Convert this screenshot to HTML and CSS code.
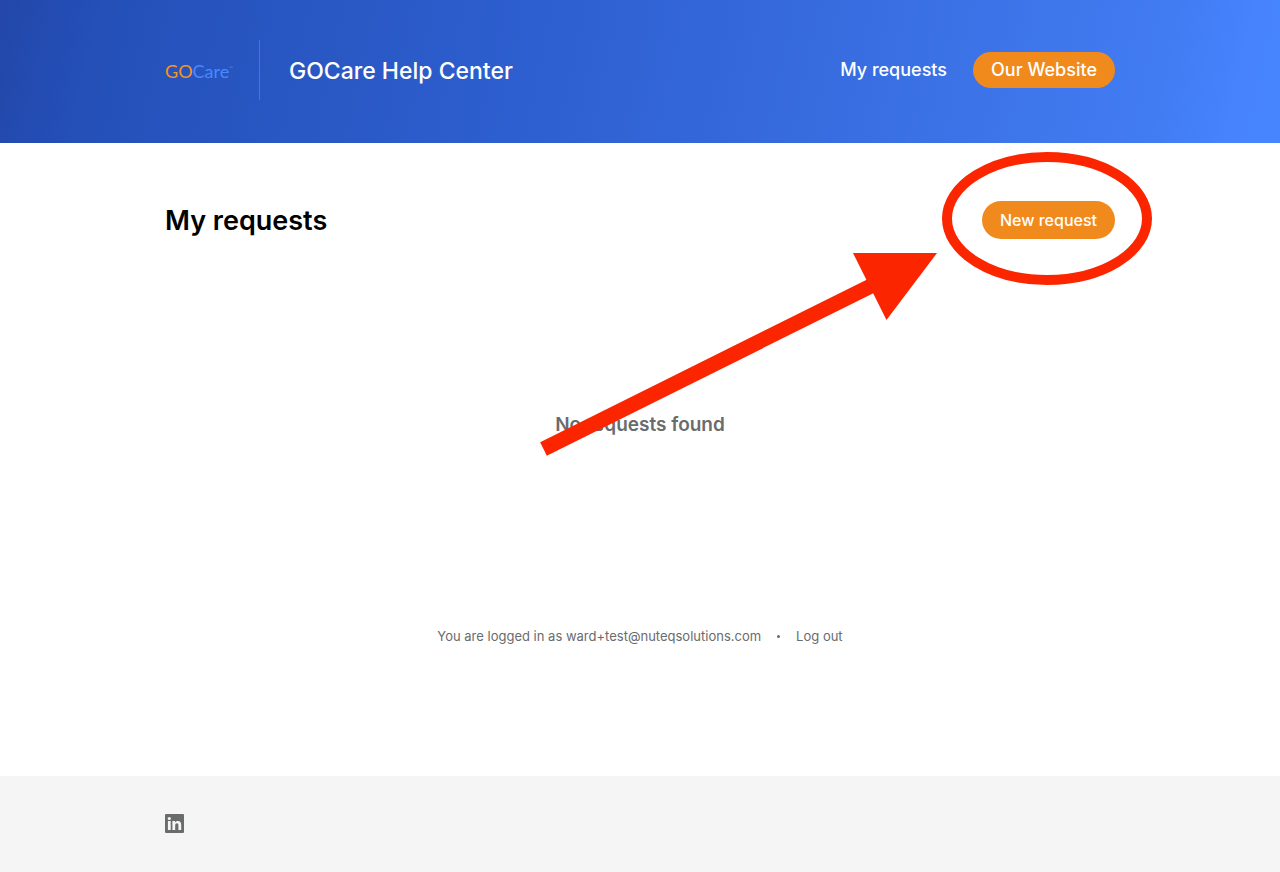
FILE: index.html
```
<!DOCTYPE html>
<html lang="en">
<head>
<meta charset="utf-8">
<meta name="viewport" content="width=device-width, initial-scale=1">
<title>GOCare Help Center</title>
<link rel="stylesheet" href="styles.css">
</head>
<body>
<header class="header">
  <div class="container header-inner">
    <a class="logo" href="#" aria-label="GOCare"><span class="logo-go">GO</span>Care<span class="logo-tm">™</span></a>
    <a class="site-name" href="#">GOCare Help Center</a>
    <nav class="nav">
      <a class="nav-link" href="#">My requests</a>
      <a class="nav-button" href="#">Our Website</a>
    </nav>
  </div>
</header>
<main class="main">
  <div class="container content">
    <div class="page-head">
      <h1 class="page-title">My requests</h1>
      <a class="new-request" href="#">New request</a>
    </div>
    <p class="empty">No requests found</p>
    <div class="session">
      <span>You are logged in as ward+test@nuteqsolutions.com</span>
      <span class="dot"></span>
      <a class="logout" href="#">Log out</a>
    </div>
    <svg class="annotation" width="630" height="317" viewBox="530 143 630 317" aria-hidden="true">
      <ellipse cx="1047" cy="218.5" rx="100" ry="61.5" fill="none" stroke="#fb2500" stroke-width="10"/>
      <path d="M543.5 449 875 284" stroke="#fb2500" stroke-width="15"/>
      <path d="M853 253H937L886.500 320Z" fill="#fb2500"/>
    </svg>
  </div>
</main>
<footer class="footer">
  <div class="container">
    <a class="social" href="#" aria-label="LinkedIn">
      <svg width="19" height="19" viewBox="0 0 19 19">
        <rect width="19" height="19" rx="1" fill="#6a6b6d"/>
        <g fill="#f5f5f5">
          <circle cx="4.300" cy="4.500" r="1.600"/>
          <path d="M2.900 7.100h2.800v9H2.900zM7.400 7.100h2.700v1.300c.5-.9 1.500-1.500 2.700-1.500 2.700 0 3.400 1.700 3.400 4.200v5h-2.800v-4.500c0-1.200-.1-2.400-1.500-2.400s-1.700 1.100-1.700 2.300v4.600H7.400z"/>
        </g>
      </svg>
    </a>
  </div>
</footer>
</body>
</html>
```
FILE: styles.css
```
* {
  box-sizing: border-box;
}

body {
  margin: 0;
  min-height: 100vh;
  display: flex;
  flex-direction: column;
  background: #fff;
  color: #000;
  font-family: Inter, "Liberation Sans", sans-serif;
}

a {
  color: inherit;
  text-decoration: none;
}

.container {
  width: 100%;
  max-width: 990px;
  margin: 0 auto;
  padding: 0 20px;
}

.header {
  padding: 40px 0 43px;
  background: linear-gradient(102deg, #2347aa 0%, #2450b8 8%, #2e5fd0 42%, #3b72e6 74%, #427cf3 90%, #4785ff 98%);
  color: #fff;
}

.header-inner {
  display: flex;
  align-items: center;
  flex-wrap: wrap;
}

.logo {
  display: flex;
  align-items: center;
  height: 60px;
  padding: 2px 26px 0 0;
  border-right: 1px solid #4b74d2;
  color: #478aff;
  font: 18px/20px Lato, sans-serif;
}

.logo-go {
  color: #f7941d;
}

.logo-tm {
  align-self: center;
  padding-bottom: 6px;
  font-size: 5px;
  line-height: 8px;
}

.site-name {
  margin-left: 29px;
  padding-top: 2px;
  font-size: 23px;
  font-weight: 500;
  line-height: 30px;
}

.nav {
  display: flex;
  align-items: center;
  gap: 26px;
  margin-left: auto;
  font-size: 18px;
  font-weight: 500;
  line-height: 36px;
}

.nav-button {
  padding: 0 18px;
  border-radius: 18px;
  background: #f08a1d;
}

.main {
  flex: 1;
}

.content {
  position: relative;
}

.page-head {
  display: flex;
  align-items: center;
  justify-content: space-between;
  padding-top: 58px;
}

.page-title {
  margin: 0;
  padding-top: 2px;
  font-size: 27px;
  font-weight: 600;
  line-height: 36px;
}

.new-request {
  padding: 0 18px;
  border-radius: 19px;
  background: #f08a1d;
  color: #fff;
  font-size: 16px;
  font-weight: 500;
  line-height: 38px;
}

.empty {
  margin: 171px 0 188px;
  color: #6a6b6d;
  font-size: 19px;
  font-weight: 600;
  line-height: 30px;
  text-align: center;
}

.session {
  display: flex;
  align-items: center;
  justify-content: center;
  gap: 16px;
  padding-bottom: 40px;
  color: #6a6b6d;
  font-size: 13px;
  line-height: 16px;
}

.dot {
  width: 3px;
  height: 3px;
  border-radius: 50%;
  background: #6a6b6d;
}

.annotation {
  position: absolute;
  top: 0;
  right: -25px;
  pointer-events: none;
}

.footer {
  padding: 38px 0;
  background: #f5f5f5;
}

.social {
  display: block;
  width: 20px;
  height: 20px;
}

.social svg {
  display: block;
}
```
